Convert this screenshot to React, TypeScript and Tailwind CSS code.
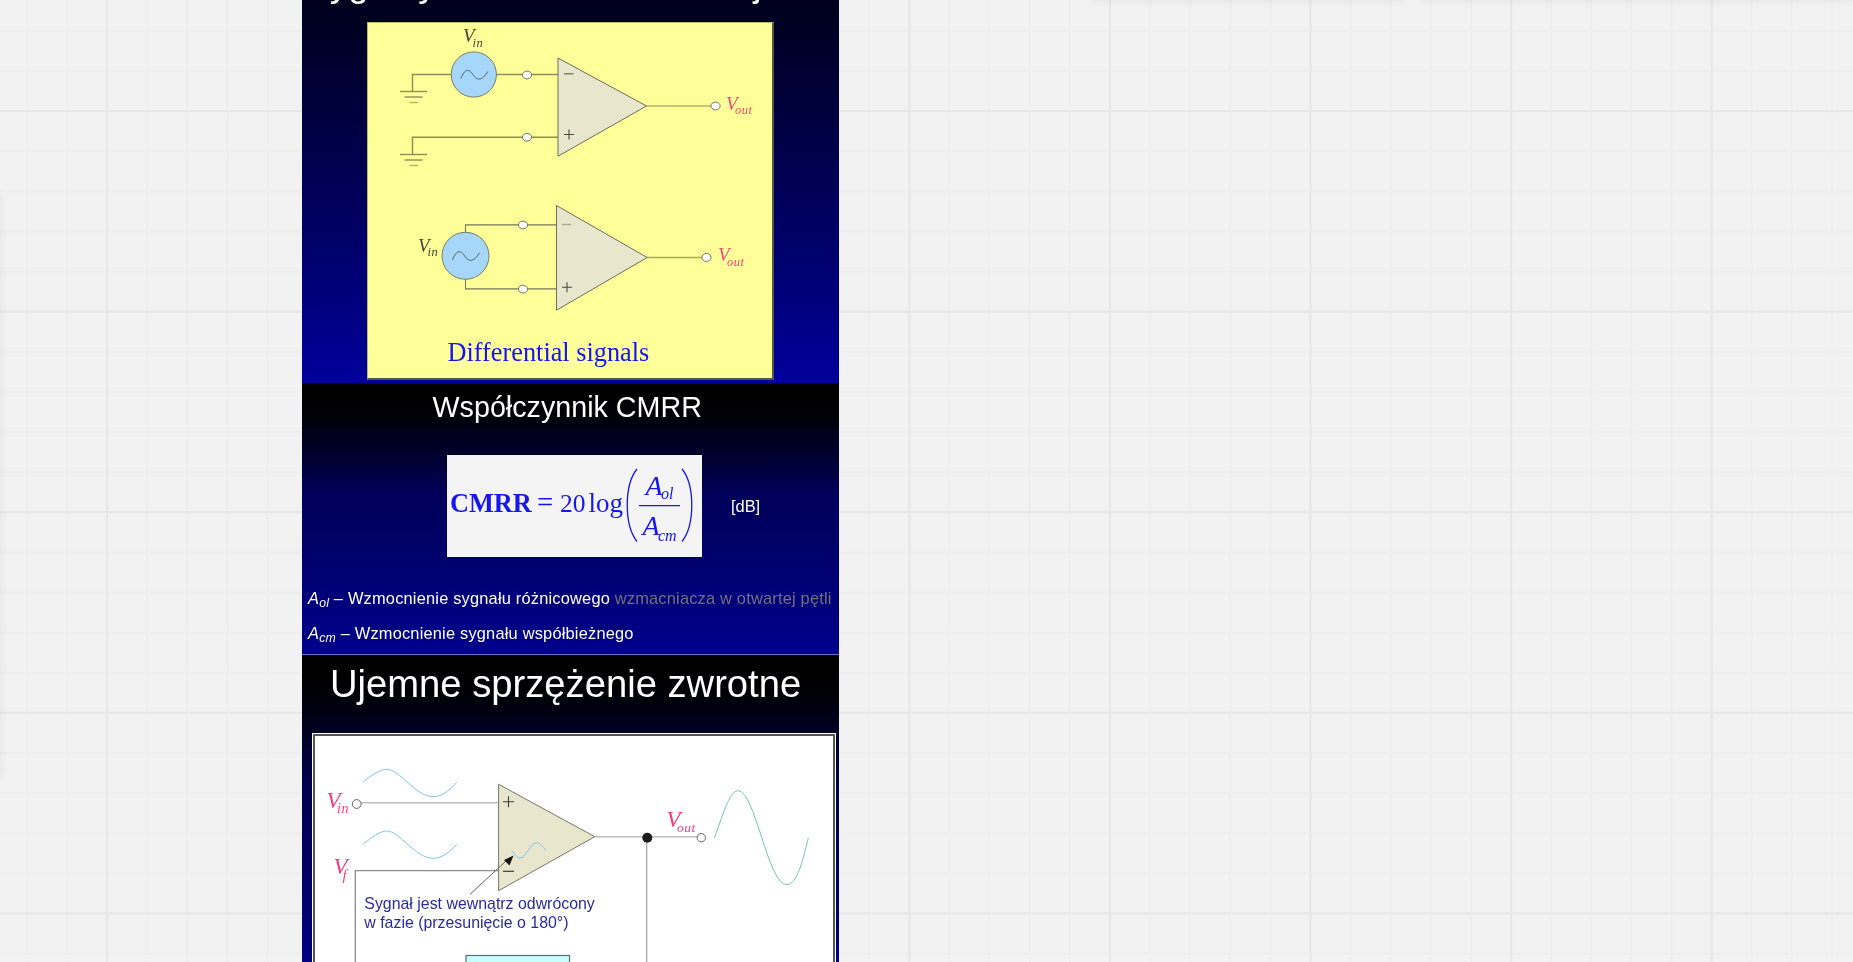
export default function App() {
	return (
		<div className="relative w-[1853px] h-[962px] overflow-hidden bg-[#f2f2f2] bg-[linear-gradient(to_right,#e7e7e7_2px,transparent_2px),linear-gradient(to_bottom,#e7e7e7_2px,transparent_2px),linear-gradient(to_right,#eeeeee_2px,transparent_2px),linear-gradient(to_bottom,#eeeeee_2px,transparent_2px)] bg-[size:200.6px_200.6px,200.6px_200.6px,40.12px_40.12px,40.12px_40.12px] bg-[position:106px_0,0_110px,26px_0,0_30px] font-['Liberation_Sans',sans-serif]">
			{/* Neighbouring cards just off the canvas edge */}
			<div className="absolute -left-[10px] top-[193px] w-[10px] h-[587px] rounded bg-[#f2f2f2] shadow-[0_0_10px_rgba(0,0,0,0.07)]" />
			<div className="absolute left-[1090px] -top-[10px] w-[316px] h-[10px] rounded bg-[#f2f2f2] shadow-[0_0_10px_rgba(0,0,0,0.08)]" />
			<div className="absolute left-[1420px] -top-[10px] w-[440px] h-[10px] rounded bg-[#f2f2f2] shadow-[0_0_10px_rgba(0,0,0,0.08)]" />

			<div className="ml-[302px] w-[537px] flex flex-col blur-[0.35px]">
				<SlideDifferential />
				<SlideCmrr />
				<SlideFeedback />
			</div>
		</div>
	);
}

function SlideDifferential() {
	return (
		<section className="h-[383px] shrink-0 overflow-hidden bg-gradient-to-b from-[#00001c] to-[#00009c]">
			<h2 className="-mt-[34px] h-[36px] pl-[3px] text-[37px] leading-[36px] text-white whitespace-nowrap [word-spacing:-4px]">
				Sygnały różnicowe konwersji
			</h2>
			<div className="mt-[20px] ml-[65px] w-[407px] h-[358px] bg-[#ffff99] border border-[#b9b96a] border-r-2 border-b-2 border-r-[#55554a] border-b-[#55554a]">
				<DifferentialDiagram />
			</div>
		</section>
	);
}

function Ground({ y }: { y: number }) {
	return (
		<g stroke="#8d8d55" strokeWidth="1.4">
			<path d={`M400 ${y}H427`} />
			<path d={`M404.5 ${y + 5.5}H422.5`} />
			<path d={`M409.5 ${y + 11}H418`} stroke="#b4b468" />
		</g>
	);
}

function Source({ cx, cy, r }: { cx: number; cy: number; r: number }) {
	return (
		<g>
			<circle cx={cx} cy={cy} r={r} fill="#a6d6fa" stroke="#77805f" strokeWidth="1" />
			<path
				d={`M${cx - 13} ${cy + 4}C${cx - 9} ${cy - 6} ${cx - 5} ${cy - 6} ${cx - 1} ${cy}S${cx + 8} ${cy + 7} ${cx + 14} ${cy - 3}`}
				fill="none"
				stroke="#54605a"
				strokeWidth="1"
			/>
		</g>
	);
}

function Node({ cx, cy }: { cx: number; cy: number }) {
	return <ellipse cx={cx} cy={cy} rx="4.6" ry="3.9" fill="#ffffff" stroke="#77775a" strokeWidth="1" />;
}

function VLabel({ x, y, sub, dx, dy, color, size, subSize }: { x: number; y: number; sub: string; dx: number; dy: number; color: string; size: number; subSize: number }) {
	return (
		<text x={x} y={y} fill={color} fontSize={size} className="font-['Liberation_Serif',serif] italic">
			V
			<tspan x={x + dx} y={y + dy} fontSize={subSize} letterSpacing="0.5">
				{sub}
			</tspan>
		</text>
	);
}

function DifferentialDiagram() {
	return (
		<svg viewBox="368 23 404 354" className="block w-full h-full">
			{/* top: single ended */}
			<g fill="none" stroke="#8d8d55" strokeWidth="1.4">
				<path d="M451 74H412.5V91" />
				<path d="M496 74H558" />
				<path d="M558 136.7H412.5V154" />
				<path d="M646.5 105.5H712" strokeWidth="1" />
			</g>
			<Ground y={91} />
			<Ground y={154} />
			<Source cx={473.8} cy={74} r={22.6} />
			<Node cx={527} cy={74.5} />
			<Node cx={527} cy={136.7} />
			<Node cx={715.5} cy={105.5} />
			<path d="M558 57.5L646.5 105.5L558 155.7Z" fill="#e8e6cd" stroke="#6d6d58" strokeWidth="1" />
			<path d="M564 73.3H573.5" stroke="#666655" strokeWidth="1.2" />
			<path d="M564 134H574M569 129V139" stroke="#4a4a40" strokeWidth="1.1" />
			<VLabel x={463} y={41.5} sub="in" dx={9.5} dy={4.5} color="#44443c" size={19} subSize={12.5} />
			<VLabel x={726} y={109} sub="out" dx={9} dy={4.5} color="#ea4a7c" size={19} subSize={12.5} />

			{/* bottom: differential */}
			<g fill="none" stroke="#77775a" strokeWidth="1.1">
				<path d="M465.5 233V224.4H556.5" />
				<path d="M465.5 278V288.4H556.5" />
				<path d="M647 257H702" stroke="#a8a868" strokeWidth="1.4" />
			</g>
			<Source cx={465.5} cy={255.3} r={23.5} />
			<Node cx={523} cy={224.5} />
			<Node cx={523} cy={288.6} />
			<Node cx={706.5} cy={257} />
			<path d="M556.5 205L647.2 257L556.5 309.7Z" fill="#e8e6cd" stroke="#6d6d58" strokeWidth="1" />
			<path d="M562 224H571" stroke="#a8a894" strokeWidth="1.4" />
			<path d="M562 286.7H572M567 281.7V291.7" stroke="#4a4a40" strokeWidth="1.1" />
			<VLabel x={418} y={251} sub="in" dx={9.5} dy={4.5} color="#44443c" size={19} subSize={12.5} />
			<VLabel x={718} y={260.5} sub="out" dx={9} dy={4.5} color="#ea4a7c" size={19} subSize={12.5} />

			<text x={447.5} y={360.5} fill="#1414f0" fontSize="26.3" className="font-['Liberation_Serif',serif]">
				Differential signals
			</text>
		</svg>
	);
}

function SlideCmrr() {
	return (
		<section className="h-[272px] shrink-0 border-b border-[#6a6ac8] bg-gradient-to-b from-[#000000] via-[#000058] via-40% to-[#00008c]">
			<h2 className="pt-[8px] pl-[130.5px] text-[28.7px] leading-[33px] text-white whitespace-nowrap">Współczynnik CMRR</h2>
			<div className="mt-[31px] ml-[145px] flex items-center">
				<div className="w-[255px] h-[102px] bg-[#f4f4f4]">
					<Formula />
				</div>
				<span className="ml-[29px] text-[16.4px] text-white">[dB]</span>
			</div>
			<div className="mt-[24px] pl-[6px] text-[16.4px] leading-[35px] text-white whitespace-nowrap">
				<p className="tracking-[0.012em]">
					<i>
						A<sub>ol</sub>
					</i>{' '}
					– Wzmocnienie sygnału różnicowego <span className="text-[#72727e]">wzmacniacza w otwartej pętli</span>
				</p>
				<p className="tracking-[0.012em]">
					<i>
						A<sub>cm</sub>
					</i>{' '}
					– Wzmocnienie sygnału współbieżnego
				</p>
			</div>
		</section>
	);
}

function Formula() {
	return (
		<svg viewBox="447 455 255 102" className="block w-full h-full font-['Liberation_Serif',serif]" fill="#1616ee">
			<text x="450" y="511.7" fontSize="26.3" fontWeight="700">
				CMRR
			</text>
			<text x="537" y="511.7" fontSize="29">
				=
			</text>
			<text x="560" y="511.7" fontSize="25.5">
				20
			</text>
			<text x="588.5" y="511.7" fontSize="27">
				log
			</text>
			<path d="M637 469C624 485 624 525 637 541.5" fill="none" stroke="#1616ee" strokeWidth="1.3" />
			<path d="M682 469C695 485 695 525 682 541.5" fill="none" stroke="#1616ee" strokeWidth="1.3" />
			<path d="M639 505.7H680" stroke="#1616ee" strokeWidth="1.2" />
			<text x="645.5" y="495" fontSize="28" fontStyle="italic">
				A
				<tspan x="661" y="499" fontSize="16">
					ol
				</tspan>
			</text>
			<text x="642.5" y="535" fontSize="28" fontStyle="italic">
				A
				<tspan x="658" y="541" fontSize="16">
					cm
				</tspan>
			</text>
		</svg>
	);
}

function SlideFeedback() {
	return (
		<section className="h-[403px] shrink-0 bg-gradient-to-b from-[#000000] via-[#000048] via-30% to-[#0000a0]">
			<h2 className="pt-[7px] pl-[28px] text-[38.2px] leading-[44px] text-white whitespace-nowrap">Ujemne sprzężenie zwrotne</h2>
			<div className="mt-[27px] ml-[10px] w-[524px] h-[300px] border border-white">
				<div className="h-full border-2 border-[#555555] bg-white">
					<FeedbackDiagram />
				</div>
			</div>
		</section>
	);
}

function FeedbackDiagram() {
	return (
		<svg viewBox="315 736 518 294" className="block w-full h-full">
			{/* wires */}
			<g fill="none">
				<path d="M361 802.7H498.6" stroke="#bcbcbc" strokeWidth="1.6" />
				<path d="M498.6 870.7H355.3V1030" stroke="#8a8a8a" strokeWidth="1.3" />
				<path d="M594.8 836.7H697" stroke="#bcbcbc" strokeWidth="1.6" />
				<path d="M646.7 838V1030" stroke="#a8a8a8" strokeWidth="1.3" />
			</g>

			{/* waveforms */}
			<g fill="none" stroke="#7cc4ec" strokeWidth="1">
				<path d="M363.3 781.7C372 775 380 769.3 386.7 769.3C400 769.3 415 796.7 433.3 796.7C442 796.7 450 790 456.7 782.3" />
				<path d="M363.3 844C372 837.5 380 831 386.7 831C400 831 415 858.3 433.3 858.3C442 858.3 450 852 456.7 844.3" />
			</g>
			<path d="M714.3 838C722 818 729 790.7 738.3 790.7C755 790.7 768 884.7 786.7 884.7C797 884.7 803 860 808.3 838" fill="none" stroke="#6fc8a8" strokeWidth="1" />

			<path d="M498.6 784.3L594.8 836.7L498.6 890.7Z" fill="#e8e6cd" stroke="#77776a" strokeWidth="1" />
			<path d="M503 801.7H514M508.5 796.2V807.2" stroke="#3c3c38" strokeWidth="1.1" />
			<path d="M503 871.3H514" stroke="#3c3c38" strokeWidth="1.2" />
			<path d="M511.7 850.7C515 854 517 858 520 858C526 858 530 842.7 536.7 842.7C540 842.7 543 847 545.7 850" fill="none" stroke="#7cc4ec" strokeWidth="1" />

			{/* arrow */}
			<path d="M470 894.3L506 861" stroke="#666666" strokeWidth="1" />
			<path d="M513.5 855.5L504 860L509.5 865.5Z" fill="#151515" />

			<circle cx="356.7" cy="804" r="4.4" fill="#ffffff" stroke="#666666" strokeWidth="1" />
			<circle cx="701.3" cy="837.7" r="4.2" fill="#ffffff" stroke="#666666" strokeWidth="1" />
			<circle cx="647.3" cy="837.7" r="5" fill="#1c1c1c" />

			<VLabel x={326.5} y={807.7} sub="in" dx={10.5} dy={5} color="#ee4080" size={23} subSize={14} />
			<VLabel x={333.5} y={874.3} sub="f" dx={9} dy={5.5} color="#ee4080" size={23} subSize={15} />
			<VLabel x={666.5} y={827.3} sub="out" dx={10.5} dy={4.5} color="#ee4080" size={23} subSize={13.5} />

			<g fill="#2a2a9e" fontSize="15.9" className="font-['Liberation_Sans',sans-serif]">
				<text x="364.3" y="909">
					Sygnał jest wewnątrz odwrócony
				</text>
				<text x="364.3" y="928.3">
					w fazie (przesunięcie o 180°)
				</text>
			</g>

			<rect x="466" y="955.5" width="103.5" height="60" fill="#c8ffff" stroke="#5a6a70" strokeWidth="1.2" />
		</svg>
	);
}
